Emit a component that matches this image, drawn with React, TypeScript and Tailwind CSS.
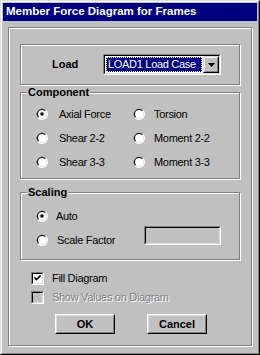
import React from 'react'

const font = { fontFamily: '"Liberation Sans", Arial, sans-serif' }

function Radio({ checked = false }: { checked?: boolean }) {
  return (
    <svg width="12" height="12" viewBox="0 0 12 12" className="shrink-0">
      <circle cx="6" cy="6" r="6" fill="#ffffff" />
      <path d="M1.76 10.24 A6 6 0 0 1 10.24 1.76 Z" fill="#808080" />
      <circle cx="6" cy="6" r="5" fill="#dfdfdf" />
      <path d="M2.46 9.54 A5 5 0 0 1 9.54 2.46 Z" fill="#000000" />
      <circle cx="6" cy="6" r="4" fill="#ffffff" />
      {checked && <circle cx="6" cy="6" r="1.8" fill="#000000" />}
    </svg>
  )
}

function Sunken({ className = '', children }: { className?: string; children?: React.ReactNode }) {
  return (
    <div className={`border border-t-[#808080] border-l-[#808080] border-b-white border-r-white ${className}`}>
      <div className="h-full w-full border border-t-black border-l-black border-b-[#dfdfdf] border-r-[#dfdfdf] flex">
        {children}
      </div>
    </div>
  )
}

function Check({ checked = false, disabled = false }: { checked?: boolean; disabled?: boolean }) {
  return (
    <Sunken className="w-[13px] h-[13px] shrink-0">
      <div className={`flex-1 flex items-center justify-center ${disabled ? 'bg-[#c0c0c0]' : 'bg-white'}`}>
        {checked && (
          <svg width="7" height="7" viewBox="0 0 7 7">
            <path d="M0.5 2.5 L2.5 4.5 L6.5 0.5" stroke="#000" strokeWidth="1.6" fill="none" />
          </svg>
        )}
      </div>
    </Sunken>
  )
}

function Group({ label, className = '', children }: { label: string; className?: string; children: React.ReactNode }) {
  return (
    <div className={`relative border border-[#808080] shadow-[inset_1px_1px_0_#fff,1px_1px_0_#fff] ${className}`}>
      <span className="absolute -top-[7px] left-[6px] px-[1px] bg-[#c0c0c0] text-[11px] font-bold leading-[13px] tracking-normal text-black">
        {label}
      </span>
      {children}
    </div>
  )
}

function Button({ children }: { children: React.ReactNode }) {
  return (
    <div className="w-[60px] h-[20px] border border-t-white border-l-white border-b-black border-r-black">
      <div className="h-full w-full border border-t-[#dfdfdf] border-l-[#dfdfdf] border-b-[#808080] border-r-[#808080] flex items-center justify-center text-[11px] font-bold tracking-normal text-black">
        {children}
      </div>
    </div>
  )
}

export default function App() {
  return (
    <div style={font} className="w-[260px] h-[355px] bg-[#c0c0c0] border border-t-[#dfdfdf] border-l-[#dfdfdf] border-b-black border-r-black">
      <div className="h-full w-full border border-t-white border-l-white border-b-[#808080] border-r-[#808080] p-[1px] flex flex-col">
        <div className="h-[18px] bg-[#000080] flex items-center pl-[3px]">
          <span className="text-white font-bold text-[11.5px] leading-none">Member Force Diagram for Frames</span>
        </div>

        <div className="mt-[6px] mx-[5px] h-[319px] border border-[#808080] shadow-[inset_1px_1px_0_#fff,1px_1px_0_#fff] px-[11px] pt-[16px] flex flex-col text-[11px] tracking-[-0.3px] text-black">
          {/* Load */}
          <div className="h-[41px] border border-[#808080] shadow-[inset_1px_1px_0_#fff,1px_1px_0_#fff] flex items-center">
            <span className="ml-[31px] w-[51px] font-bold tracking-normal">Load</span>
            <Sunken className="w-[118px] h-[21px]">
              <div className="flex-1 bg-white flex items-center p-[1px]">
                <div className="flex-1 h-full bg-[#000080] outline-1 outline-dotted outline-[#ffff99] -outline-offset-1 flex items-center pl-[2px] text-white whitespace-nowrap overflow-hidden">
                  LOAD1 Load Case
                </div>
              </div>
              <div className="w-[16px] border border-t-[#dfdfdf] border-l-[#dfdfdf] border-b-black border-r-black">
                <div className="h-full w-full border border-t-white border-l-white border-b-[#808080] border-r-[#808080] bg-[#c0c0c0] flex items-center justify-center">
                  <svg width="7" height="4" viewBox="0 0 7 4">
                    <path d="M0 0 H7 L3.5 4 Z" fill="#000" />
                  </svg>
                </div>
              </div>
            </Sunken>
          </div>

          {/* Component */}
          <Group label="Component" className="mt-[7px] h-[87px] pt-[9px] pl-[15px]">
            <div className="grid grid-cols-[97px_1fr]">
              {[
                ['Axial Force', 'Torsion'],
                ['Shear 2-2', 'Moment 2-2'],
                ['Shear 3-3', 'Moment 3-3'],
              ].map(([a, b], i) => (
                <React.Fragment key={a}>
                  <div className="h-[24px] flex items-center">
                    <Radio checked={i === 0} />
                    <span className="ml-[11px]">{a}</span>
                  </div>
                  <div className="h-[24px] flex items-center">
                    <Radio />
                    <span className="ml-[9px]">{b}</span>
                  </div>
                </React.Fragment>
              ))}
            </div>
          </Group>

          {/* Scaling */}
          <Group label="Scaling" className="mt-[13px] h-[68px] pt-[11px] pl-[15px] pr-[18px]">
            <div className="h-[24px] flex items-center">
              <Radio checked />
              <span className="ml-[8px]">Auto</span>
            </div>
            <div className="h-[24px] flex items-center">
              <Radio />
              <span className="ml-[9px]">Scale Factor</span>
              <Sunken className="ml-auto self-start -mt-[2px] w-[77px] h-[19px]">
                <div className="flex-1 bg-[#c0c0c0]" />
              </Sunken>
            </div>
          </Group>

          {/* Options */}
          <div className="mt-[9px] pl-[11px]">
            <div className="h-[19px] flex items-center">
              <Check checked />
              <span className="ml-[8px]">Fill Diagram</span>
            </div>
            <div className="h-[19px] flex items-center">
              <Check disabled />
              <span className="ml-[8px] text-[#808080] [text-shadow:1px_1px_0_#fff]">Show Values on Diagram</span>
            </div>
          </div>

          <div className="mt-[7px] pl-[35px] flex gap-[32px]">
            <Button>OK</Button>
            <Button>Cancel</Button>
          </div>
        </div>
      </div>
    </div>
  )
}
